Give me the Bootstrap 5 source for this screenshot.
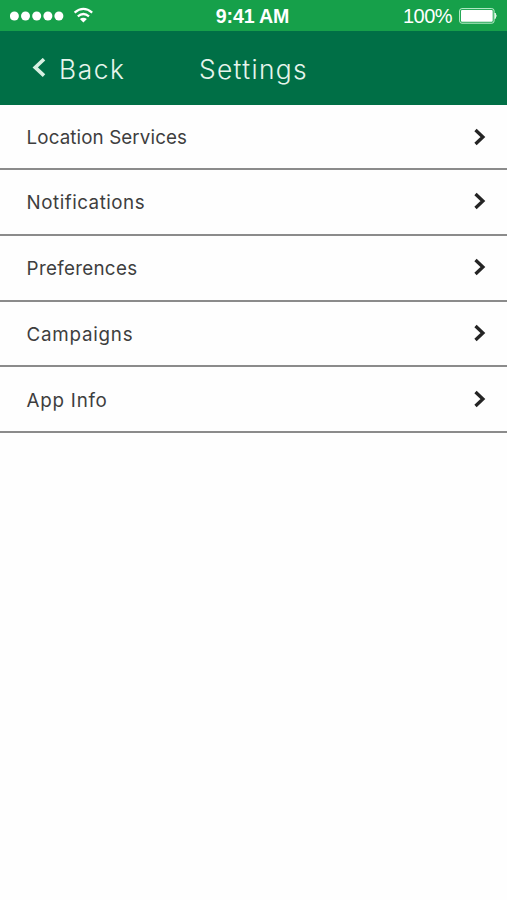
<!DOCTYPE html>
<html lang="en">
<head>
<meta charset="utf-8">
<meta name="viewport" content="width=device-width, initial-scale=1">
<title>Settings</title>
<link rel="stylesheet" href="https://cdn.jsdelivr.net/npm/bootstrap@5.3.0/dist/css/bootstrap.min.css">
<style>
body{font-family:Inter,"Liberation Sans",sans-serif;background:#fefefe;color:#454545}
svg{display:block}
.statusbar{height:31px;background:#16a04a;color:#fff;font-family:"Liberation Sans",sans-serif;padding:1px 10px 0 10px;display:grid;grid-template-columns:1fr auto 1fr}
.clock{font-size:19.6px;font-weight:700;letter-spacing:-.15px;line-height:30px;margin-left:-2px}
.charge{font-size:20px;letter-spacing:-.55px;line-height:30px;margin-right:7px}
.appbar{height:74px;background:#006f46;color:#e6f5ec;font-size:26.3px;font-weight:300;padding:3px 32px 0;display:grid;grid-template-columns:1fr auto 1fr}
.back{letter-spacing:1.6px;color:inherit}
.back svg{margin:-3px 13px 0 0}
.title{letter-spacing:1.4px}
.settings .list-group-item{height:65.75px;padding:3px 21px 0 26.6px;border:0;border-bottom:2px solid #8b8b8b;background:transparent;color:#3e3e3e;font-size:18.8px;letter-spacing:.3px}
.settings .list-group-item:first-child{height:65px;padding-top:4px;letter-spacing:.1px}
.settings .list-group-item:nth-child(2){letter-spacing:.5px}
.settings .list-group-item:last-child{border-bottom:2px solid #8b8b8b}
.settings .list-group-item.spaced{letter-spacing:.75px}
.settings .list-group-item svg{margin-top:-4px}
</style>
</head>
<body>
<div class="statusbar align-items-center">
  <svg width="86" height="28" viewBox="0 0 86 28" fill="#fff" aria-label="Signal and Wi-Fi">
    <circle cx="4.4" cy="14" r="4.5"/><circle cx="15.5" cy="14" r="4.5"/><circle cx="26.7" cy="14" r="4.5"/><circle cx="37.9" cy="14" r="4.5"/><circle cx="48.9" cy="14" r="4.5"/>
    <g fill="none" stroke="#fff" stroke-width="2.2"><path d="M64.6 10.6q8.8-7.4 17.6 0"/><path d="M67.8 14.4q5.6-4.8 11.2 0"/></g>
    <path d="M69.9 17q3.5-2.6 7 0L73.4 20.4z"/>
  </svg>
  <div class="clock">9:41 AM</div>
  <div class="d-flex justify-content-end align-items-center">
    <span class="charge">100%</span>
    <svg width="38" height="16" viewBox="0 0 38 16" aria-label="Battery full"><rect x=".6" y=".6" width="34.5" height="14.6" rx="2.3" fill="none" stroke="#bff0ce" stroke-width="1"/><rect x="2" y="2" width="31.7" height="11.8" rx="1" fill="#fff"/><path d="M36 5q2.4 2.8 0 5.6z" fill="#dff8e6" stroke="#dff8e6"/></svg>
  </div>
</div>
<header class="appbar align-items-center">
  <a href="#" class="back d-flex align-items-center text-decoration-none">
    <svg width="14" height="20" viewBox="0 0 14 20" fill="none" stroke="#d7f0e2" stroke-width="3.6"><path d="M12 1.2 3.2 9.4l8.8 8.2"/></svg><span>Back</span>
  </a>
  <div class="title">Settings</div>
</header>
<main class="settings list-group list-group-flush">
  <a href="#" class="list-group-item d-flex justify-content-between align-items-center"><span>Location Services</span><svg width="13" height="18" viewBox="0 0 13 18" fill="none" stroke="#242424" stroke-width="3.3"><path d="m2.5 2 7.4 7-7.4 7"/></svg></a>
  <a href="#" class="list-group-item d-flex justify-content-between align-items-center"><span>Notifications</span><svg width="13" height="18" viewBox="0 0 13 18" fill="none" stroke="#242424" stroke-width="3.3"><path d="m2.5 2 7.4 7-7.4 7"/></svg></a>
  <a href="#" class="list-group-item d-flex justify-content-between align-items-center"><span>Preferences</span><svg width="13" height="18" viewBox="0 0 13 18" fill="none" stroke="#242424" stroke-width="3.3"><path d="m2.5 2 7.4 7-7.4 7"/></svg></a>
  <a href="#" class="list-group-item spaced d-flex justify-content-between align-items-center"><span>Campaigns</span><svg width="13" height="18" viewBox="0 0 13 18" fill="none" stroke="#242424" stroke-width="3.3"><path d="m2.5 2 7.4 7-7.4 7"/></svg></a>
  <a href="#" class="list-group-item spaced d-flex justify-content-between align-items-center"><span>App Info</span><svg width="13" height="18" viewBox="0 0 13 18" fill="none" stroke="#242424" stroke-width="3.3"><path d="m2.5 2 7.4 7-7.4 7"/></svg></a>
</main>
<script src="https://cdn.jsdelivr.net/npm/bootstrap@5.3.0/dist/js/bootstrap.bundle.min.js"></script>
</body>
</html>
